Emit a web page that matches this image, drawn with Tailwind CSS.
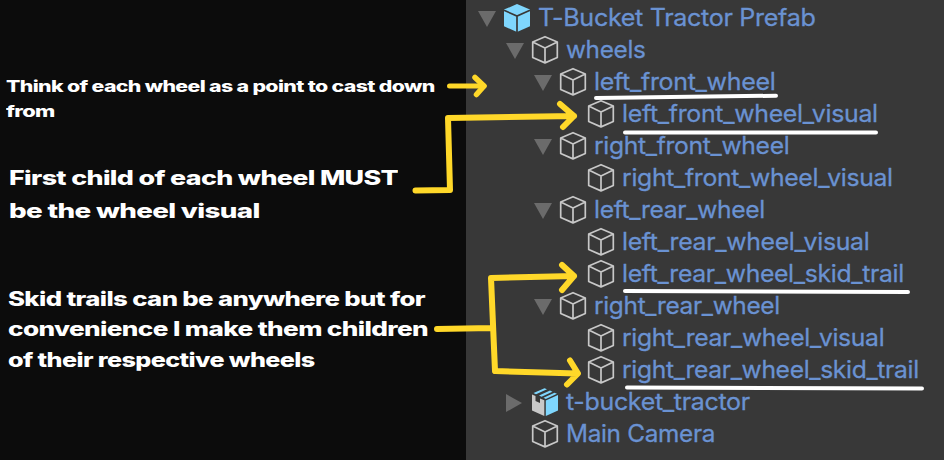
<!DOCTYPE html>
<html lang="en">
<head>
<meta charset="utf-8">
<title>Prefab hierarchy notes</title>
<script src="https://cdn.jsdelivr.net/npm/@tailwindcss/browser@4"></script>
</head>
<body class="w-[944px] h-[460px] overflow-hidden bg-[#0c0c0c] font-['Inter',sans-serif]">
<svg class="hidden">
  <symbol id="cube" viewBox="0 0 28 30"><path d="M14 1.7 26.3 7V22.5L14 27.9 1.7 22.5V7ZM1.7 7 14 13 26.3 7M14 13V27.700" fill="none" stroke="#c8c8c8" stroke-width="1.7" stroke-linejoin="round"/></symbol>
  <symbol id="prefab" viewBox="0 0 28 30"><path d="M14 1 27 6.6V23.3L14 29 1 23.3V6.6Z" fill="#7fd6fd"/><path d="M1 7.3 14 13 27 7.3M14 13V29" fill="none" stroke="#383838" stroke-width="1.7"/></symbol>
  <symbol id="model" viewBox="0 0 28 30"><path d="M1 7.5 4.5 9V14L9 16V11.5L13.3 13.3V29L1 23.5Z" fill="#c8c8c8"/><path d="M14.8 13.4 27 8V23.5L14.8 29ZM2.5 6 13.5 1.2 16 2.2 5 7.2ZM8 8.6 19 3.6 21.5 4.7 10.5 9.8ZM12.5 10.8 23.5 5.7 26 6.8 14.8 12Z" fill="#7fd6fd"/></symbol>
  <symbol id="open" viewBox="0 0 18 16"><path d="M0 0H18L9 16Z" fill="#6b6b6b"/></symbol>
  <symbol id="closed" viewBox="0 0 16 18"><path d="M0 0 16 9 0 18Z" fill="#6b6b6b"/></symbol>
</svg>
<main class="relative flex h-[460px]">
  <section class="w-[466px] shrink-0 text-white font-extrabold tracking-[-0.03em] whitespace-nowrap pt-[74px]">
    <div class="pl-[6px] text-[15.5px] leading-[25px]">
      <p><span class="inline-block origin-left" data-w="428">Think of each wheel as a point to cast down</span></p>
      <p><span class="inline-block origin-left" data-w="48">from</span></p>
    </div>
    <div class="pl-[8.5px] pt-[38px] text-[20px] leading-[33px]">
      <p><span class="inline-block origin-left" data-w="389">First child of each wheel MUST</span></p>
      <p><span class="inline-block origin-left" data-w="250">be the wheel visual</span></p>
    </div>
    <div class="pl-[8px] pt-[56px] text-[19.5px] leading-[30.4px]">
      <p><span class="inline-block origin-left" data-w="417">Skid trails can be anywhere but for</span></p>
      <p><span class="inline-block origin-left" data-w="420">convenience I make them children</span></p>
      <p><span class="inline-block origin-left" data-w="307">of their respective wheels</span></p>
    </div>
  </section>
  <section id="tree" class="flex-1 bg-[#383838] pt-[2px] text-[24px] tracking-[-0.3px] leading-[32px] text-[#6a92d2] [-webkit-text-stroke:0.3px_#6a92d2] whitespace-nowrap"></section>
  <svg class="absolute inset-0" width="944" height="460" viewBox="0 0 944 460" fill="none" stroke-linecap="round" stroke-linejoin="round">
    <g stroke="#ffd829" stroke-width="6">
      <path d="M449.500 86H484" stroke-width="5"/>
      <path d="M475 77.500 484 86 476.500 94.500" stroke-width="5.500"/>
      <path d="M415.500 190.500 450 190 448 118 574 116M560 104 574 116 563 127"/>
      <path d="M437 329 492 328M574 276 491 278 495 371 577 373.500M562 265 574 276 562 290M570 360.500 578 373.500 567 384.500"/>
    </g>
    <g stroke="#fff" stroke-width="4">
      <path d="M596 98 776 95.700M625 132.500H876M625 291 908 292M627 387.500 922 388.500"/>
    </g>
  </svg>
</main>
<script>
const rows = [
  [0, 'open', 'prefab', 'T-Bucket Tractor Prefab', 277],
  [1, 'open', 'cube', 'wheels', 80],
  [2, 'open', 'cube', 'left_front_wheel', 181],
  [3, '', 'cube', 'left_front_wheel_visual', 256],
  [2, 'open', 'cube', 'right_front_wheel', 195],
  [3, '', 'cube', 'right_front_wheel_visual', 271],
  [2, 'open', 'cube', 'left_rear_wheel', 171],
  [3, '', 'cube', 'left_rear_wheel_visual', 247],
  [3, '', 'cube', 'left_rear_wheel_skid_trail', 282],
  [2, 'open', 'cube', 'right_rear_wheel', 186],
  [3, '', 'cube', 'right_rear_wheel_visual', 262],
  [3, '', 'cube', 'right_rear_wheel_skid_trail', 297],
  [1, 'closed', 'model', 't-bucket_tractor', 184],
  [1, '', 'cube', 'Main Camera', 149]
];
document.getElementById('tree').innerHTML = rows.map(([d, arrow, icon, label, w]) => `
  <div class="flex h-[32px] items-center" style="padding-left:${12 + d * 28}px">
    <span class="w-[25px] shrink-0 flex items-center pt-[2px]">${arrow === 'open' ? '<svg class="w-[18px] h-[16px]"><use href="#open"/></svg>' : arrow ? '<svg class="w-[16px] h-[18px]"><use href="#closed"/></svg>' : ''}</span>
    <svg class="w-[28px] h-[30px] shrink-0"><use href="#${icon}"/></svg>
    <span class="inline-block shrink-0 origin-left ml-[7px] -mt-[1px]" data-w="${w}">${label}</span>
  </div>`).join('');
const fit = el => { el.style.transform = `scaleX(${el.dataset.w / el.offsetWidth})`; };
const watcher = new ResizeObserver(entries => entries.forEach(e => fit(e.target)));
document.querySelectorAll('[data-w]').forEach(el => { fit(el); watcher.observe(el); });
</script>
</body>
</html>
